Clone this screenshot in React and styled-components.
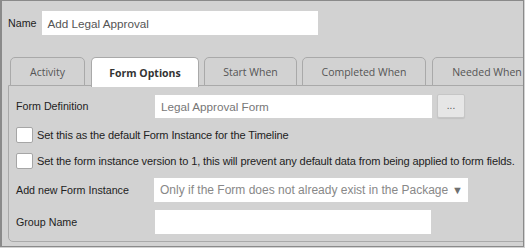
import React from 'react';
import styled, { createGlobalStyle } from 'styled-components';

const Global = createGlobalStyle`
  html, body {
    margin: 0;
    padding: 0;
    background: #d2d2d2;
  }
  * { box-sizing: border-box; }
`;

const Frame = styled.div`
  width: 524px;
  height: 247px;
  border: 1px solid #8a8a8a;
  border-left-width: 2px;
  background: #d2d2d2;
  overflow: hidden;
  padding: 10px 0 0 6px;
  font-family: "Liberation Sans", Arial, sans-serif;
  font-size: 11.05px;
  color: #222;
`;

const NameRow = styled.div`
  display: flex;
  align-items: center;
  gap: 5px;
`;

const Label = styled.label`
  font-size: 10.7px;
  color: #222;
  width: ${p => p.$width || 'auto'};
  flex-shrink: 0;
`;

const TextBox = styled.div`
  width: ${p => p.$width}px;
  height: ${p => p.$height || 24}px;
  background: #fff;
  display: flex;
  align-items: center;
  padding-left: 6px;
  font-size: ${p => p.$size || 11.7}px;
  color: ${p => p.$color || '#666'};
  white-space: nowrap;
`;

const Tabs = styled.div`
  display: flex;
  margin: 22px 0 0 2px;
  height: 29px;
  position: relative;
  z-index: 1;
`;

const Tab = styled.div`
  width: ${p => p.$width}px;
  margin-right: ${p => p.$gap || 5}px;
  flex-shrink: 0;
  height: ${p => (p.$active ? 30 : 29)}px;
  border: 1px solid #a9a9a9;
  border-bottom: ${p => (p.$active ? 'none' : '1px solid #a9a9a9')};
  border-radius: 5px 5px 0 0;
  background: ${p => (p.$active ? '#fff' : '#d2d2d2')};
  display: flex;
  align-items: center;
  justify-content: center;
  padding-top: 1px;
  font-family: "Open Sans", "Noto Sans", sans-serif;
  font-size: 10.5px;
  font-weight: ${p => (p.$active ? 700 : 400)};
  color: ${p => (p.$active ? '#333' : '#555')};
  white-space: nowrap;
`;

const Panel = styled.div`
  width: 560px;
  height: 157px;
  margin-top: -1px;
  border: 1px solid #a9a9a9;
  border-radius: 0 0 0 5px;
  padding: 8px 0 0 7px;
  display: flex;
  flex-direction: column;
  gap: 8px;
`;

const Row = styled.div`
  display: flex;
  align-items: center;
  height: ${p => p.$height || 24}px;
  white-space: nowrap;
`;

const CheckText = styled.span`
  letter-spacing: -0.13px;
`;

const MoreButton = styled.div`
  width: 28px;
  height: 24px;
  margin-left: 5px;
  background: #e6e6e6;
  border: 1px solid #c6c6c6;
  border-radius: 2px;
  box-shadow: 0 1px 1px rgba(0, 0, 0, 0.08);
  display: flex;
  align-items: center;
  justify-content: center;
  font-size: 10px;
  color: #555;
  padding-bottom: 2px;
`;

const Check = styled.span`
  width: 17px;
  height: 16px;
  background: #fff;
  border: 1px solid #a6a6a6;
  border-radius: 2px;
  margin-right: 4px;
  flex-shrink: 0;
`;

const Select = styled(TextBox)`
  justify-content: space-between;
  padding-right: 5px;
`;

const Arrow = styled.span`
  font-size: 11px;
  color: #707070;
`;

const App = () => (
  <>
    <Global />
    <Frame>
      <NameRow>
        <Label>Name</Label>
        <TextBox $width={276} $color="#555">Add Legal Approval</TextBox>
      </NameRow>
      <Tabs>
        <Tab $width={75} $gap={6}>Activity</Tab>
        <Tab $width={108} $active>Form Options</Tab>
        <Tab $width={93}>Start When</Tab>
        <Tab $width={124} $gap={6}>Completed When</Tab>
        <Tab $width={110}>Needed When</Tab>
      </Tabs>
      <Panel>
        <Row>
          <Label $width="139px">Form Definition</Label>
          <TextBox $width={277} $height={23} $color="#777">Legal Approval Form</TextBox>
          <MoreButton>...</MoreButton>
        </Row>
        <Row $height={18}>
          <Check />
          <CheckText>Set this as the default Form Instance for the Timeline</CheckText>
        </Row>
        <Row $height={18}>
          <Check />
          <CheckText>
            Set the form instance version to 1, this will prevent any default data from being applied to form fields.
          </CheckText>
        </Row>
        <Row>
          <Label $width="138px">Add new Form Instance</Label>
          <Select $width={314} $size={12} $color="#888">
            Only if the Form does not already exist in the Package
            <Arrow>▼</Arrow>
          </Select>
        </Row>
        <Row>
          <Label $width="139px">Group Name</Label>
          <TextBox $width={276} />
        </Row>
      </Panel>
    </Frame>
  </>
);

export default App;
